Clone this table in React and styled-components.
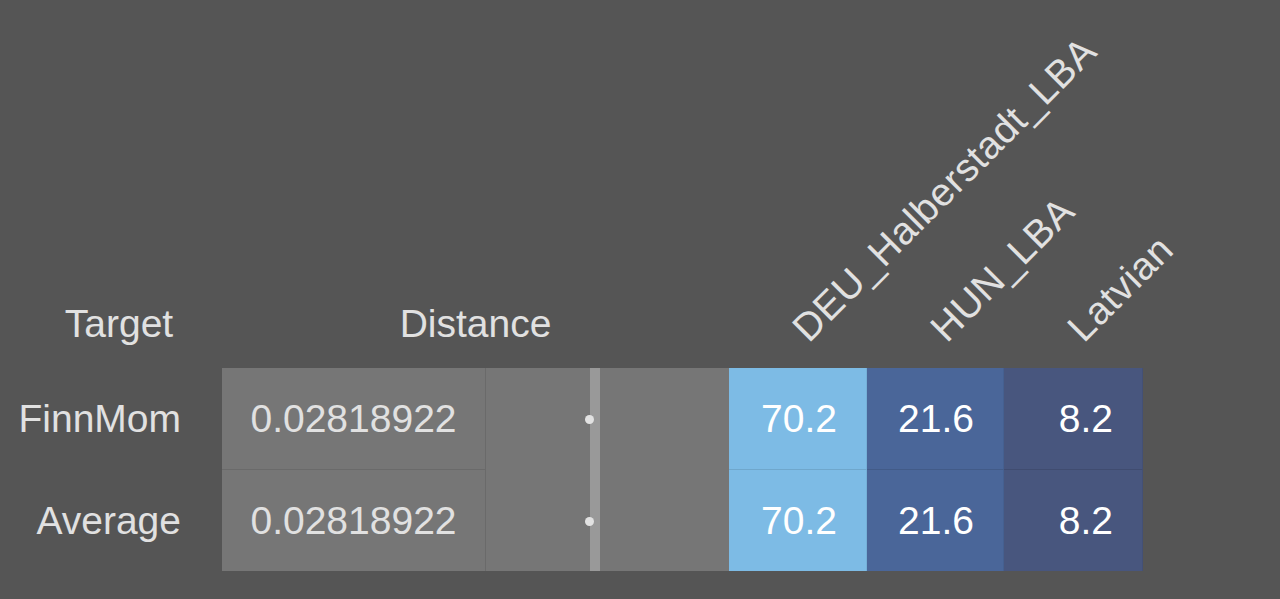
import React from 'react';
import styled, { createGlobalStyle } from 'styled-components';

const POPS = ['DEU_Halberstadt_LBA', 'HUN_LBA', 'Latvian'];
const SHADES = ['#7dbbe5', '#4a6699', '#48567e'];

const ROWS = [
  { name: 'FinnMom', distance: '0.02818922', values: ['70.2', '21.6', '8.2'] },
  { name: 'Average', distance: '0.02818922', values: ['70.2', '21.6', '8.2'] },
];

const GlobalStyle = createGlobalStyle`
  html, body {
    margin: 0;
    background: #555555;
  }
  body {
    font-family: "Liberation Sans", Arial, Helvetica, sans-serif;
  }
`;

const Page = styled.div`
  height: 599px;
  padding-left: 16px;
  overflow: hidden;
`;

const Grid = styled.div`
  display: grid;
  grid-template-columns: 206px 264px 243px 138px 137px 139px;
  grid-template-rows: 368px 102px 101px;
  font-size: 39px;
  color: #e1e1e1;
`;

const HeadCell = styled.div`
  grid-column: ${p => p.span || 'auto'};
  display: flex;
  align-items: flex-end;
  justify-content: center;
  padding-bottom: 22px;
  line-height: 45px;
`;

const SlantCell = styled.div`
  position: relative;
`;

const SlantText = styled.span`
  position: absolute;
  left: 86px;
  bottom: 18px;
  white-space: nowrap;
  line-height: 45px;
  letter-spacing: 0.6px;
  transform-origin: left bottom;
  transform: rotate(-45deg);
`;

const Label = styled.div`
  display: flex;
  align-items: center;
  justify-content: flex-end;
  padding-right: 41px;
`;

const Num = styled.div`
  display: flex;
  align-items: center;
  justify-content: center;
  background: #767676;
  border-right: 1px solid #6a6a6a;
  border-bottom: ${p => (p.last ? 'none' : '1px solid #6a6a6a')};
`;

const Bar = styled.div`
  position: relative;
  background: linear-gradient(to right, #767676 104px, #999999 104px, #999999 114px, #767676 114px);
`;

const Dot = styled.span`
  position: absolute;
  top: 50%;
  width: 9px;
  height: 9px;
  margin: -4px 0 0 -5px;
  border-radius: 50%;
  background: #e2e2e2;
`;

const Share = styled.div`
  display: flex;
  align-items: center;
  justify-content: flex-end;
  padding-right: 29px;
  background: ${p => p.shade};
  color: #ffffff;
  border-bottom: ${p => (p.last ? 'none' : '1px solid rgba(0, 0, 0, 0.1)')};
  border-right: 1px solid rgba(0, 0, 0, 0.06);
`;

export default function App() {
  return (
    <Page>
      <GlobalStyle />
      <Grid>
        <HeadCell>Target</HeadCell>
        <HeadCell span="span 2">Distance</HeadCell>
        {POPS.map(p => (
          <SlantCell key={p}>
            <SlantText>{p}</SlantText>
          </SlantCell>
        ))}
        {ROWS.map((r, i) => {
          const last = i === ROWS.length - 1;
          return (
            <React.Fragment key={r.name}>
              <Label>{r.name}</Label>
              <Num last={last}>{r.distance}</Num>
              <Bar>
                <Dot style={{ left: `${(parseFloat(r.distance) / 0.0272) * 100}px` }} />
              </Bar>
              {r.values.map((v, j) => (
                <Share key={j} shade={SHADES[j]} last={last}>{v}</Share>
              ))}
            </React.Fragment>
          );
        })}
      </Grid>
    </Page>
  );
}
